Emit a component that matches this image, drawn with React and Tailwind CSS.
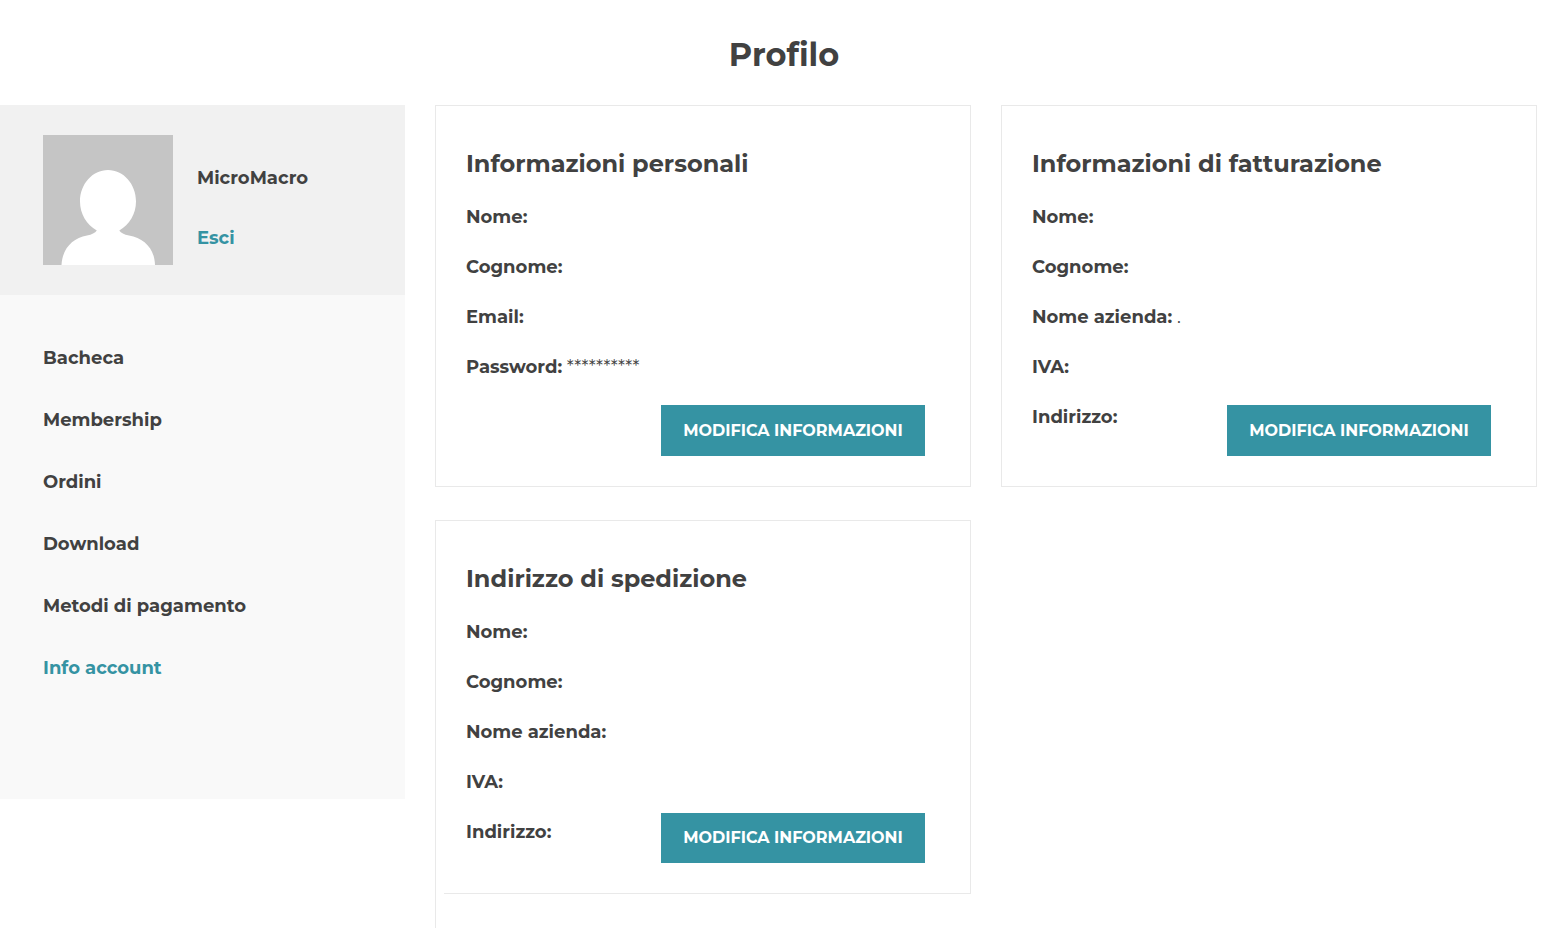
import clsx from 'clsx';

const MENU = [
  { title: 'Bacheca', href: '#bacheca' },
  { title: 'Membership', href: '#membership' },
  { title: 'Ordini', href: '#ordini' },
  { title: 'Download', href: '#download' },
  { title: 'Metodi di pagamento', href: '#pagamento' },
  { title: 'Info account', href: '#account', active: true },
];

const Avatar = () => (
  <svg viewBox="0 0 130 130" className="size-[130px] shrink-0 bg-[#c5c5c5]" aria-hidden="true">
    <path
      fill="#fff"
      d="M65 35C80.500 35 93 49 93 66.500C93 79 86.500 89.500 76.300 95.500C78 98 81 99.500 86 100.500C101 103.500 111.500 113 112 130H18.500C19.500 113 29.500 103.500 44 100.500C49 99.500 52 98 53.800 95.500C43.500 89.500 37 79 37 66.500C37 49 49.500 35 65 35Z"
    />
  </svg>
);

function Field({ label, value }) {
  return (
    <p className="text-lg leading-[50px]">
      <span className="font-bold">{label}:</span> {value}
    </p>
  );
}

function EditButton({ className }) {
  return (
    <button
      type="button"
      className={clsx(
        'ml-auto w-[264px] shrink-0 self-end bg-[#3593a3] text-base font-bold text-white uppercase',
        className
      )}
    >
      Modifica informazioni
    </button>
  );
}

const CardTitle = ({ children }) => (
  <h2 className="pb-px text-2xl leading-[55px] font-bold">{children}</h2>
);

export default function App() {
  return (
    <div className="min-h-screen bg-white font-['Montserrat','Inter',sans-serif] text-[#414141]">
      <h1 className="pt-1 text-center text-[32px] leading-[101px] font-bold">Profilo</h1>
      <div className="flex items-start">
        {/* Sidebar */}
        <aside className="w-[405px] shrink-0 bg-[#f9f9f9]">
          <div className="flex gap-6 bg-[#f1f1f1] py-[30px] pl-[43px]">
            <Avatar />
            <div className="flex flex-col items-start gap-[30px] pt-7 text-lg leading-[30px] font-bold">
              <p>MicroMacro</p>
              <a href="#esci" className="text-[#3593a3]">Esci</a>
            </div>
          </div>
          <nav className="flex flex-col items-start pt-8 pb-[100px] pl-[43px]">
            {MENU.map((item) => (
              <a
                key={item.title}
                href={item.href}
                className={clsx('text-lg leading-[62px] font-bold', item.active && 'text-[#3593a3]')}
              >
                {item.title}
              </a>
            ))}
          </nav>
        </aside>

        {/* Cards */}
        <main className="grid flex-1 grid-cols-2 gap-x-[30px] gap-y-[33px] pr-[31px] pl-[30px]">
          <section className="border border-[#e9e9e9] p-[30px]">
            <CardTitle>Informazioni personali</CardTitle>
            <Field label="Nome" />
            <Field label="Cognome" />
            <Field label="Email" />
            <Field label="Password" value="**********" />
            <div className="flex h-16 pr-[15px]">
              <EditButton className="h-[51px]" />
            </div>
          </section>

          <section className="border border-[#e9e9e9] p-[30px]">
            <CardTitle>Informazioni di fatturazione</CardTitle>
            <Field label="Nome" />
            <Field label="Cognome" />
            <Field label="Nome azienda" value="." />
            <Field label="IVA" />
            <div className="flex h-16 pr-[15px]">
              <Field label="Indirizzo" />
              <EditButton className="h-[51px]" />
            </div>
          </section>

          {/* the left rule runs on below this card */}
          <section className="border-l border-[#e9e9e9] pb-[34px]">
            <div className="border-t border-r border-[#e9e9e9] p-[30px]">
              <CardTitle>Indirizzo di spedizione</CardTitle>
              <Field label="Nome" />
              <Field label="Cognome" />
              <Field label="Nome azienda" />
              <Field label="IVA" />
              <div className="flex h-14 pr-[15px]">
                <Field label="Indirizzo" />
                <EditButton className="h-[50px]" />
              </div>
            </div>
            <div className="ml-2 border-b border-[#e9e9e9]" />
          </section>
        </main>
      </div>
    </div>
  );
}
